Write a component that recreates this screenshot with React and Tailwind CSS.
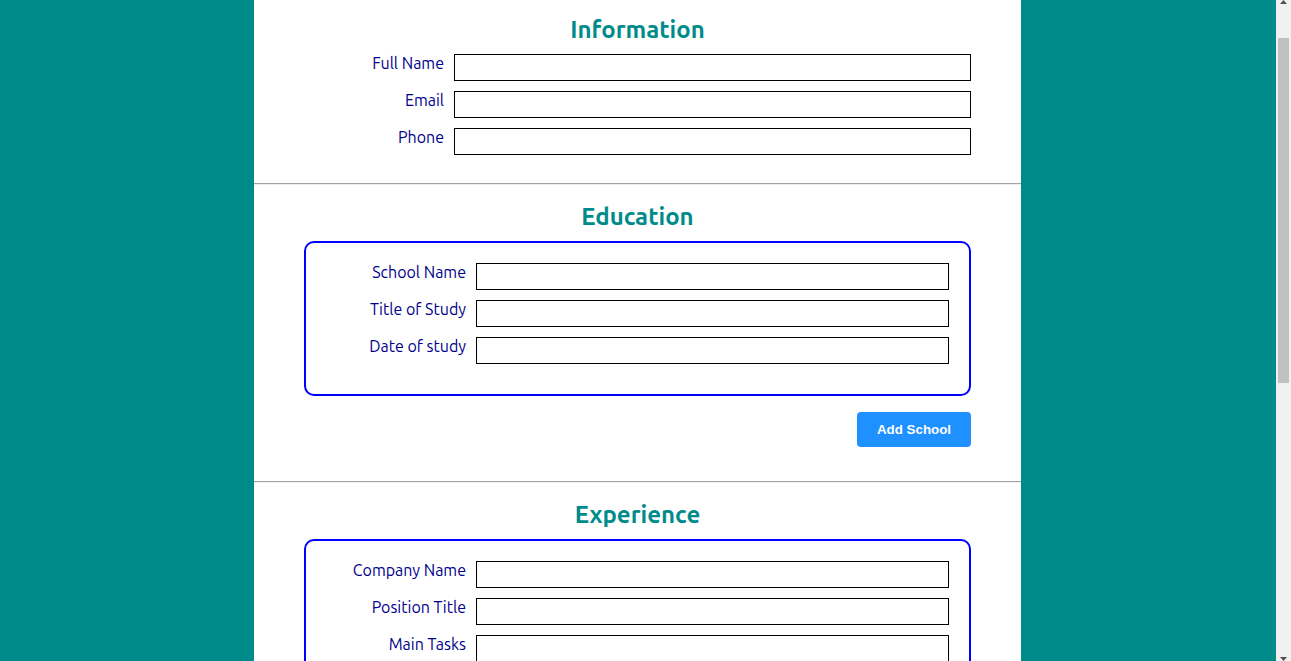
const infoFields = ['Full Name', 'Email', 'Phone'];
const schoolFields = ['School Name', 'Title of Study', 'Date of study'];
const jobFields = ['Company Name', 'Position Title', 'Main Tasks', 'Date of work'];

function Field({ label, tall }) {
  return (
    <div className="flex items-start gap-[10px] mb-[10px]">
      <label className="w-[140px] shrink-0 text-right text-[16px] leading-[18px] text-[#00008b]">
        {label}
      </label>
      {tall ? (
        <textarea className="flex-1 h-[80px] border border-black bg-white resize-none" />
      ) : (
        <input className="flex-1 h-[27px] border border-black bg-white" type="text" />
      )}
    </div>
  );
}

function Heading({ children }) {
  return (
    <h2 className="text-center text-[24px] leading-[32px] font-bold text-[#008b8b]">{children}</h2>
  );
}

function Divider() {
  return <div className="border-t border-[#a4a4a4] border-b border-b-[#eeeeee]" />;
}

function AddButton({ children }) {
  return (
    <div className="flex justify-end">
      <button className="w-[114px] h-[35px] rounded-[4px] bg-[#1e90ff] text-white font-bold text-[13.33px] font-['Liberation_Sans',Arial,sans-serif]">
        {children}
      </button>
    </div>
  );
}

function Scrollbar() {
  return (
    <div className="w-[15px] shrink-0 h-screen sticky top-0 bg-[#f1f1f1] flex flex-col items-center">
      <svg width="15" height="15" viewBox="0 0 15 15">
        <polygon points="4,4 11,4 7.5,0" fill="#505050" />
      </svg>
      <div className="w-[11px] h-[345px] mt-[23px] bg-[#c1c1c1]" />
      <div className="flex-1" />
      <svg width="15" height="15" viewBox="0 0 15 15">
        <polygon points="4,11 11,11 7.5,15" fill="#505050" />
      </svg>
    </div>
  );
}

export default function App() {
  return (
    <div className="flex min-h-screen bg-[#008b8b] font-['Ubuntu','Lato',sans-serif]">
      <div className="flex-1 flex justify-center pr-[1px]">
        <div className="w-[767px] bg-white min-h-screen">
          <section className="px-[50px] pt-[14px] pb-[18px]">
            <div className="mb-[8px]">
              <Heading>Information</Heading>
            </div>
            {infoFields.map(f => (
              <Field key={f} label={f} />
            ))}
          </section>
          <Divider />
          <section className="px-[50px] pt-[16px] pb-[34px]">
            <div className="mb-[8px]">
              <Heading>Education</Heading>
            </div>
            <div className="border-2 border-[#0000ff] rounded-[10px] p-[20px]">
              {schoolFields.map(f => (
                <Field key={f} label={f} />
              ))}
            </div>
            <div className="mt-[16px]">
              <AddButton>Add School</AddButton>
            </div>
          </section>
          <Divider />
          <section className="px-[50px] pt-[16px] pb-[34px]">
            <div className="mb-[8px]">
              <Heading>Experience</Heading>
            </div>
            <div className="border-2 border-[#0000ff] rounded-[10px] p-[20px]">
              {jobFields.map(f => (
                <Field key={f} label={f} tall={f === 'Main Tasks'} />
              ))}
            </div>
            <div className="mt-[16px]">
              <AddButton>Add Job</AddButton>
            </div>
          </section>
          <Divider />
          <section className="px-[50px] py-[30px] flex justify-center">
            <button className="w-[114px] h-[35px] rounded-[4px] bg-[#1e90ff] text-white font-bold text-[13.33px] font-['Liberation_Sans',Arial,sans-serif]">
              Submit
            </button>
          </section>
        </div>
      </div>
      <Scrollbar />
    </div>
  );
}
